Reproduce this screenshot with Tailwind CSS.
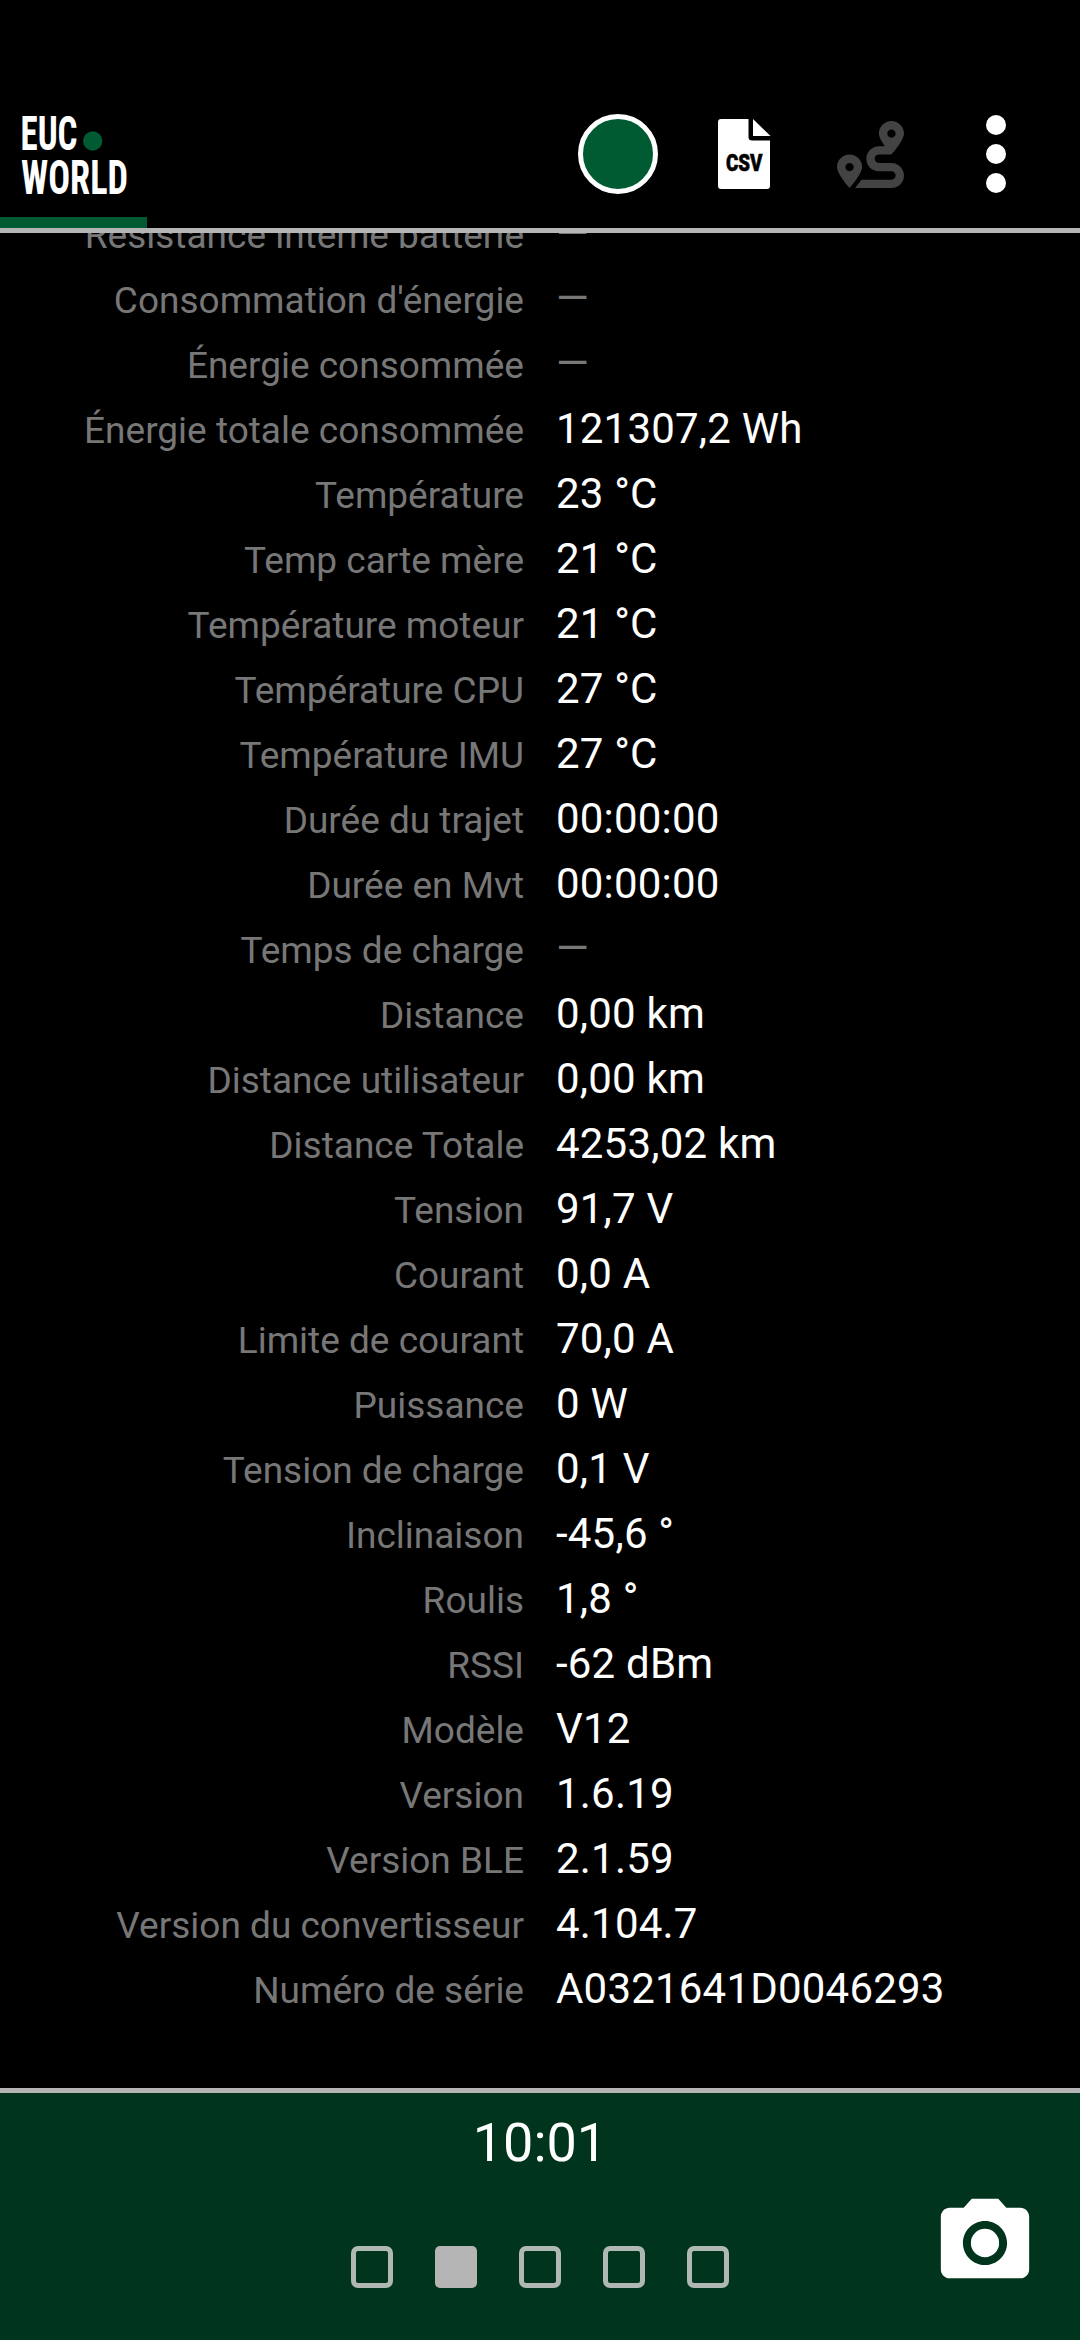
<!DOCTYPE html>
<html lang="fr">
<head>
  <meta charset="UTF-8" />
  <meta name="viewport" content="width=device-width, initial-scale=1" />
  <title>EUC World</title>
  <script src="https://cdn.jsdelivr.net/npm/@tailwindcss/browser@4"></script>
</head>
<body class="bg-black font-['Roboto',sans-serif]">
  <div class="flex flex-col w-[1080px] h-[2340px] overflow-hidden">
    <!-- Header -->
    <header class="flex flex-col justify-between h-[233px] shrink-0 border-b-5 border-[#b5b5b5]">
      <div class="flex pt-[100px] pl-[18px]">
        <svg class="w-[122px] h-[110px] mr-[438px]" viewBox="18 100 122 110" fill="#fff" font-family="Roboto, sans-serif" font-weight="700" font-stretch="condensed" font-size="48.500">
          <text x="20.500" y="149.500" textLength="57" lengthAdjust="spacingAndGlyphs">EUC</text>
          <text x="21" y="194" textLength="107" lengthAdjust="spacingAndGlyphs">WORLD</text>
          <circle cx="92.700" cy="141" r="9.700" fill="#005a32" />
        </svg>
        <button class="size-20 mt-[14px] rounded-full bg-[#005a32] border-5 border-white"></button>
        <svg class="w-[53px] h-[70px] mt-[19px] ml-[60px]" viewBox="0 0 53 70">
          <path fill="#fff" d="M3 0H30.500V18Q30.500 21.500 34 21.500H52V67Q52 70 49 70H3Q0 70 0 67V3Q0 0 3 0Z" />
          <path fill="#fff" d="M35 0L52.500 17H35Z" />
          <text x="8" y="52" textLength="36.500" lengthAdjust="spacingAndGlyphs" font-family="Roboto, sans-serif" font-weight="900" font-size="24" stroke="#000" stroke-width=".6">CSV</text>
        </svg>
        <svg class="size-[67px] mt-[21px] ml-[66px]" viewBox="0 0 512 512">
          <path fill="#434343" d="M416 320h-96c-17.600 0-32-14.400-32-32s14.400-32 32-32h96s96-107 96-160-43-96-96-96-96 43-96 96c0 25.500 22.200 63.400 45.300 96H320c-52.900 0-96 43.100-96 96s43.100 96 96 96h96c17.600 0 32 14.400 32 32s-14.400 32-32 32H185.500c-16 24.800-33.800 47.700-47.300 64H416c52.900 0 96-43.100 96-96s-43.100-96-96-96zm0-256c17.700 0 32 14.300 32 32s-14.300 32-32 32-32-14.300-32-32 14.300-32 32-32zM96 256c-53 0-96 43-96 96s96 160 96 160 96-107 96-160-43-96-96-96zm0 128c-17.700 0-32-14.300-32-32s14.300-32 32-32 32 14.300 32 32-14.300 32-32 32z" />
        </svg>
        <div class="flex flex-col gap-[9px] mt-[15px] ml-[82px]">
          <span class="size-5 rounded-full bg-white"></span>
          <span class="size-5 rounded-full bg-white"></span>
          <span class="size-5 rounded-full bg-white"></span>
        </div>
      </div>
      <div class="w-[147px] h-[11px] bg-[#005a32]"></div>
    </header>

    <!-- Scrolled list of readings -->
    <main class="flex-1 min-h-0 overflow-hidden">
      <div id="readings" class="-mt-[32px]"></div>
    </main>

    <!-- Footer -->
    <footer class="flex flex-col items-center h-[252px] shrink-0 border-t-5 border-[#b5b5b5] bg-[#00341c]">
      <div class="mt-[18px] h-16 leading-16 text-[54px] text-white">10:01</div>
      <div class="flex w-full pl-[351px]">
        <div class="flex gap-[42px] pt-[71px]">
          <span class="size-[42px] rounded-[7px] border-5 border-[#b0b8b3]"></span>
          <span class="size-[42px] rounded-[5px] bg-[#b5b5b5]"></span>
          <span class="size-[42px] rounded-[7px] border-5 border-[#b0b8b3]"></span>
          <span class="size-[42px] rounded-[7px] border-5 border-[#b0b8b3]"></span>
          <span class="size-[42px] rounded-[7px] border-5 border-[#b0b8b3]"></span>
        </div>
        <svg class="size-[106px] mt-[15px] ml-[203px]" viewBox="0 0 24 24" fill="#fff">
          <circle cx="12" cy="12" r="3.200" />
          <path d="M9 2L7.170 4H4c-1.100 0-2 .9-2 2v12c0 1.100.9 2 2 2h16c1.100 0 2-.9 2-2V6c0-1.100-.9-2-2-2h-3.170L15 2H9zm3 15c-2.760 0-5-2.240-5-5s2.240-5 5-5 5 2.240 5 5-2.240 5-5 5z" />
        </svg>
      </div>
    </footer>
  </div>

  <script>
    const readings = [
      ['Résistance interne batterie', null],
      ["Consommation d'énergie", null],
      ['Énergie consommée', null],
      ['Énergie totale consommée', '121307,2 Wh'],
      ['Température', '23 °C'],
      ['Temp carte mère', '21 °C'],
      ['Température moteur', '21 °C'],
      ['Température CPU', '27 °C'],
      ['Température IMU', '27 °C'],
      ['Durée du trajet', '00:00:00'],
      ['Durée en Mvt', '00:00:00'],
      ['Temps de charge', null],
      ['Distance', '0,00 km'],
      ['Distance utilisateur', '0,00 km'],
      ['Distance Totale', '4253,02 km'],
      ['Tension', '91,7 V'],
      ['Courant', '0,0 A'],
      ['Limite de courant', '70,0 A'],
      ['Puissance', '0 W'],
      ['Tension de charge', '0,1 V'],
      ['Inclinaison', '-45,6 °'],
      ['Roulis', '1,8 °'],
      ['RSSI', '-62 dBm'],
      ['Modèle', 'V12'],
      ['Version', '1.6.19'],
      ['Version BLE', '2.1.59'],
      ['Version du convertisseur', '4.104.7'],
      ['Numéro de série', 'A0321641D0046293'],
    ];

    const container = document.getElementById('readings');
    readings.forEach(([label, value]) => {
      const row = document.createElement('div');
      row.className = 'flex items-baseline gap-8 h-[65px] leading-[65px] whitespace-nowrap';

      const labelEl = document.createElement('div');
      labelEl.className = 'w-[524px] text-right text-[37px] text-[#777777]';
      labelEl.textContent = label;

      const valueEl = document.createElement('div');
      valueEl.className = value === null ? 'text-[42px] text-[#777777]' : 'text-[42px] tracking-[0.2px] text-white';
      valueEl.textContent = value === null ? '—' : value;

      row.append(labelEl, valueEl);
      container.appendChild(row);
    });
  </script>
</body>
</html>
